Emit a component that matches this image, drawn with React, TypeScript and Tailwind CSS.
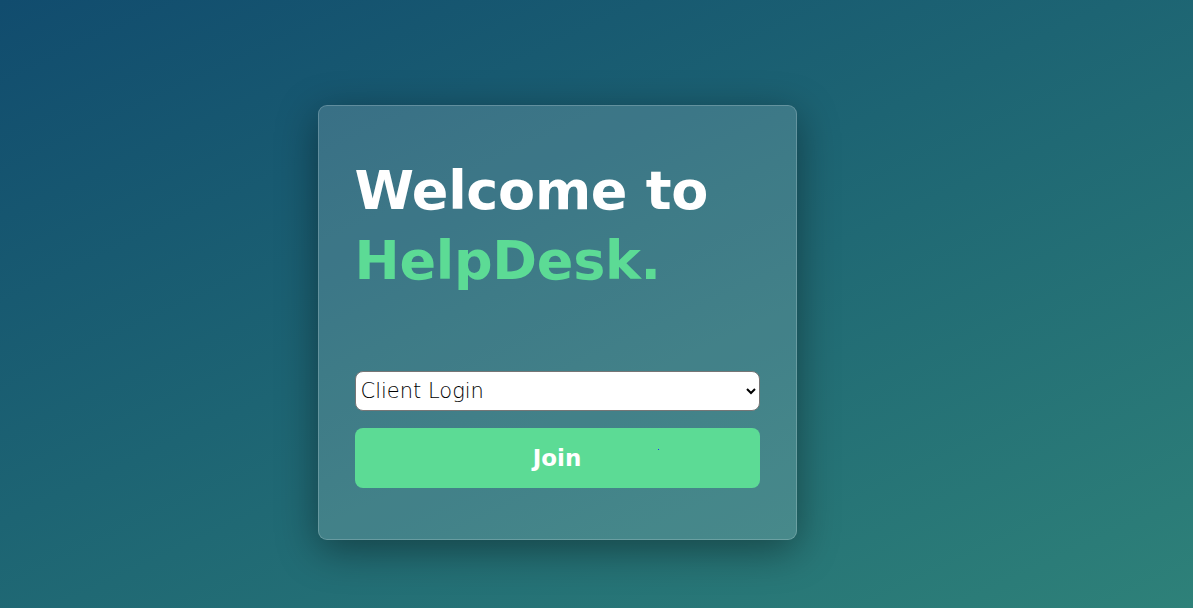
import React from "react";

export default function App() {
  return (
    <div className="relative w-full h-[608px] overflow-hidden bg-[linear-gradient(155deg,#114c6e_0%,#1d6473_45%,#2e8179_100%)] flex items-start justify-center">
      <div className="mt-[105px] ml-[-79px] w-[479px] h-[435px] rounded-[9px] border border-white/20 bg-white/15 shadow-[0_10px_40px_rgba(0,0,0,0.4)] px-[36px] pt-[50px] flex flex-col">
        <h1 className="text-[54px] leading-[70px] font-bold text-white tracking-[-0.3px]" style={{ fontFamily: '"DejaVu Sans", sans-serif' }}>
          Welcome to
          <br />
          <span className="text-[#5cdb95]">HelpDesk.</span>
        </h1>
        <select
          className="mt-[75px] h-[40px] w-full rounded-[8px] border border-[#767676] bg-white pl-[1px] pr-[6px] text-[21px] text-black font-extralight"
          style={{ fontFamily: '"DejaVu Sans", sans-serif' }}
          defaultValue="client"
        >
          <option value="client">Client Login</option>
          <option value="agent">Agent Login</option>
        </select>
        <button
          className="relative mt-[17px] h-[60px] w-full rounded-[8px] bg-[#5cdb95] text-white text-[23px] font-bold"
          style={{ fontFamily: '"DejaVu Sans", sans-serif' }}
        >
          Join
          <span className="absolute left-[303px] top-[21px] w-[1px] h-[1px] bg-[#1a2cff]" />
        </button>
      </div>
    </div>
  );
}
